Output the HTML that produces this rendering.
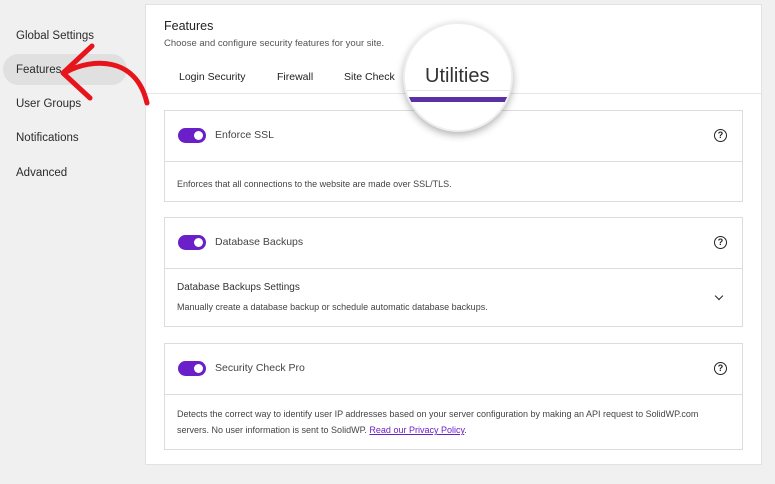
<!DOCTYPE html>
<html><head><style>
body{margin:0;width:775px;height:484px;background:#f0f0f0;font-family:"Liberation Sans",sans-serif;position:relative;overflow:hidden;color:#1e1e1e}
.a{position:absolute}
.nav{left:16px;font-size:11.5px;color:#2a2a2a}
.panel{left:145px;top:4px;width:617px;height:461px;background:#fff;border:1px solid #e2e2e2;box-sizing:border-box}
.card{position:absolute;left:164px;width:579px;background:#fff;border:1px solid #dcdcdc;box-sizing:border-box}
.hd{height:50px;border-bottom:1px solid #dcdcdc;position:relative}
.tg{position:absolute;left:13px;top:17px;width:28px;height:15px;border-radius:8px;background:#6a1fc8}
.tg:after{content:"";position:absolute;right:3px;top:3px;width:9px;height:9px;border-radius:50%;background:#fff}
.lab{position:absolute;left:50px;top:18px;font-size:10.5px;color:#444}
.q{position:absolute;right:15px;top:18px;width:11px;height:11px;border:1.3px solid #222;border-radius:50%;font-size:9px;line-height:11px;text-align:center;font-weight:bold}
.txt{font-size:9px;color:#444;padding:0 12px;line-height:16px}
.tab{top:71px;font-size:10.5px;color:#222}
</style></head><body>
<div class="a nav" style="top:30px">Global Settings</div>
<div class="a" style="left:3px;top:54px;width:124px;height:31px;border-radius:16px;background:#e0e0e0"></div>
<div class="a nav" style="top:64px">Features</div>
<div class="a nav" style="top:98px">User Groups</div>
<div class="a nav" style="top:132px">Notifications</div>
<div class="a nav" style="top:167px">Advanced</div>
<div class="a panel"></div>
<div class="a" style="left:164px;top:19px;font-size:12.5px;color:#222">Features</div>
<div class="a" style="left:164px;top:38px;font-size:9.5px;color:#555">Choose and configure security features for your site.</div>
<div class="a tab" style="left:179px">Login Security</div>
<div class="a tab" style="left:277px">Firewall</div>
<div class="a tab" style="left:344px">Site Check</div>
<div class="a" style="left:146px;top:93px;width:615px;height:1px;background:#e6e6e6"></div>
<div class="card" style="top:110px;height:92px"><div class="hd"><div class="tg"></div><div class="lab">Enforce SSL</div><div class="q">?</div></div><div class="txt" style="padding-top:14px">Enforces that all connections to the website are made over SSL/TLS.</div></div>
<div class="card" style="top:217px;height:110px"><div class="hd"><div class="tg"></div><div class="lab">Database Backups</div><div class="q">?</div></div><div class="txt" style="padding-top:11px;font-size:10px;color:#333">Database Backups Settings</div><div class="txt" style="padding-top:3px">Manually create a database backup or schedule automatic database backups.</div><div style="position:absolute;right:20px;top:75px;width:5px;height:5px;border-right:1.5px solid #222;border-bottom:1.5px solid #222;transform:rotate(45deg)"></div></div>
<div class="card" style="top:343px;height:107px"><div class="hd"><div class="tg"></div><div class="lab">Security Check Pro</div><div class="q">?</div></div><div class="txt" style="padding-top:11px">Detects the correct way to identify user IP addresses based on your server configuration by making an API request to SolidWP.com servers. No user information is sent to SolidWP. <span style="color:#6a1fc8;text-decoration:underline">Read our Privacy Policy</span>.</div></div>
<div class="a" style="left:403px;top:22px;width:110px;height:110px;border-radius:50%;background:#fff;border:2px solid #eee;box-shadow:0 3px 8px rgba(0,0,0,.3);overflow:hidden;box-sizing:border-box">
<div class="a" style="left:0;top:66px;width:110px;height:1px;background:#e6e6e6"></div>
<div class="a" style="left:20px;top:41px;font-size:20px;color:#333">Utilities</div>
<div class="a" style="left:4px;top:73px;width:102px;height:5px;background:#5b2fa6"></div></div>
<svg class="a" style="left:0;top:0" width="200" height="120"><path d="M66 72 C92 58 136 56 147 103" fill="none" stroke="#e8141c" stroke-width="5" stroke-linecap="round"/><path d="M92 46 L63 73 L90 98" fill="none" stroke="#e8141c" stroke-width="5" stroke-linecap="round" stroke-linejoin="round"/></svg>
</body></html>
